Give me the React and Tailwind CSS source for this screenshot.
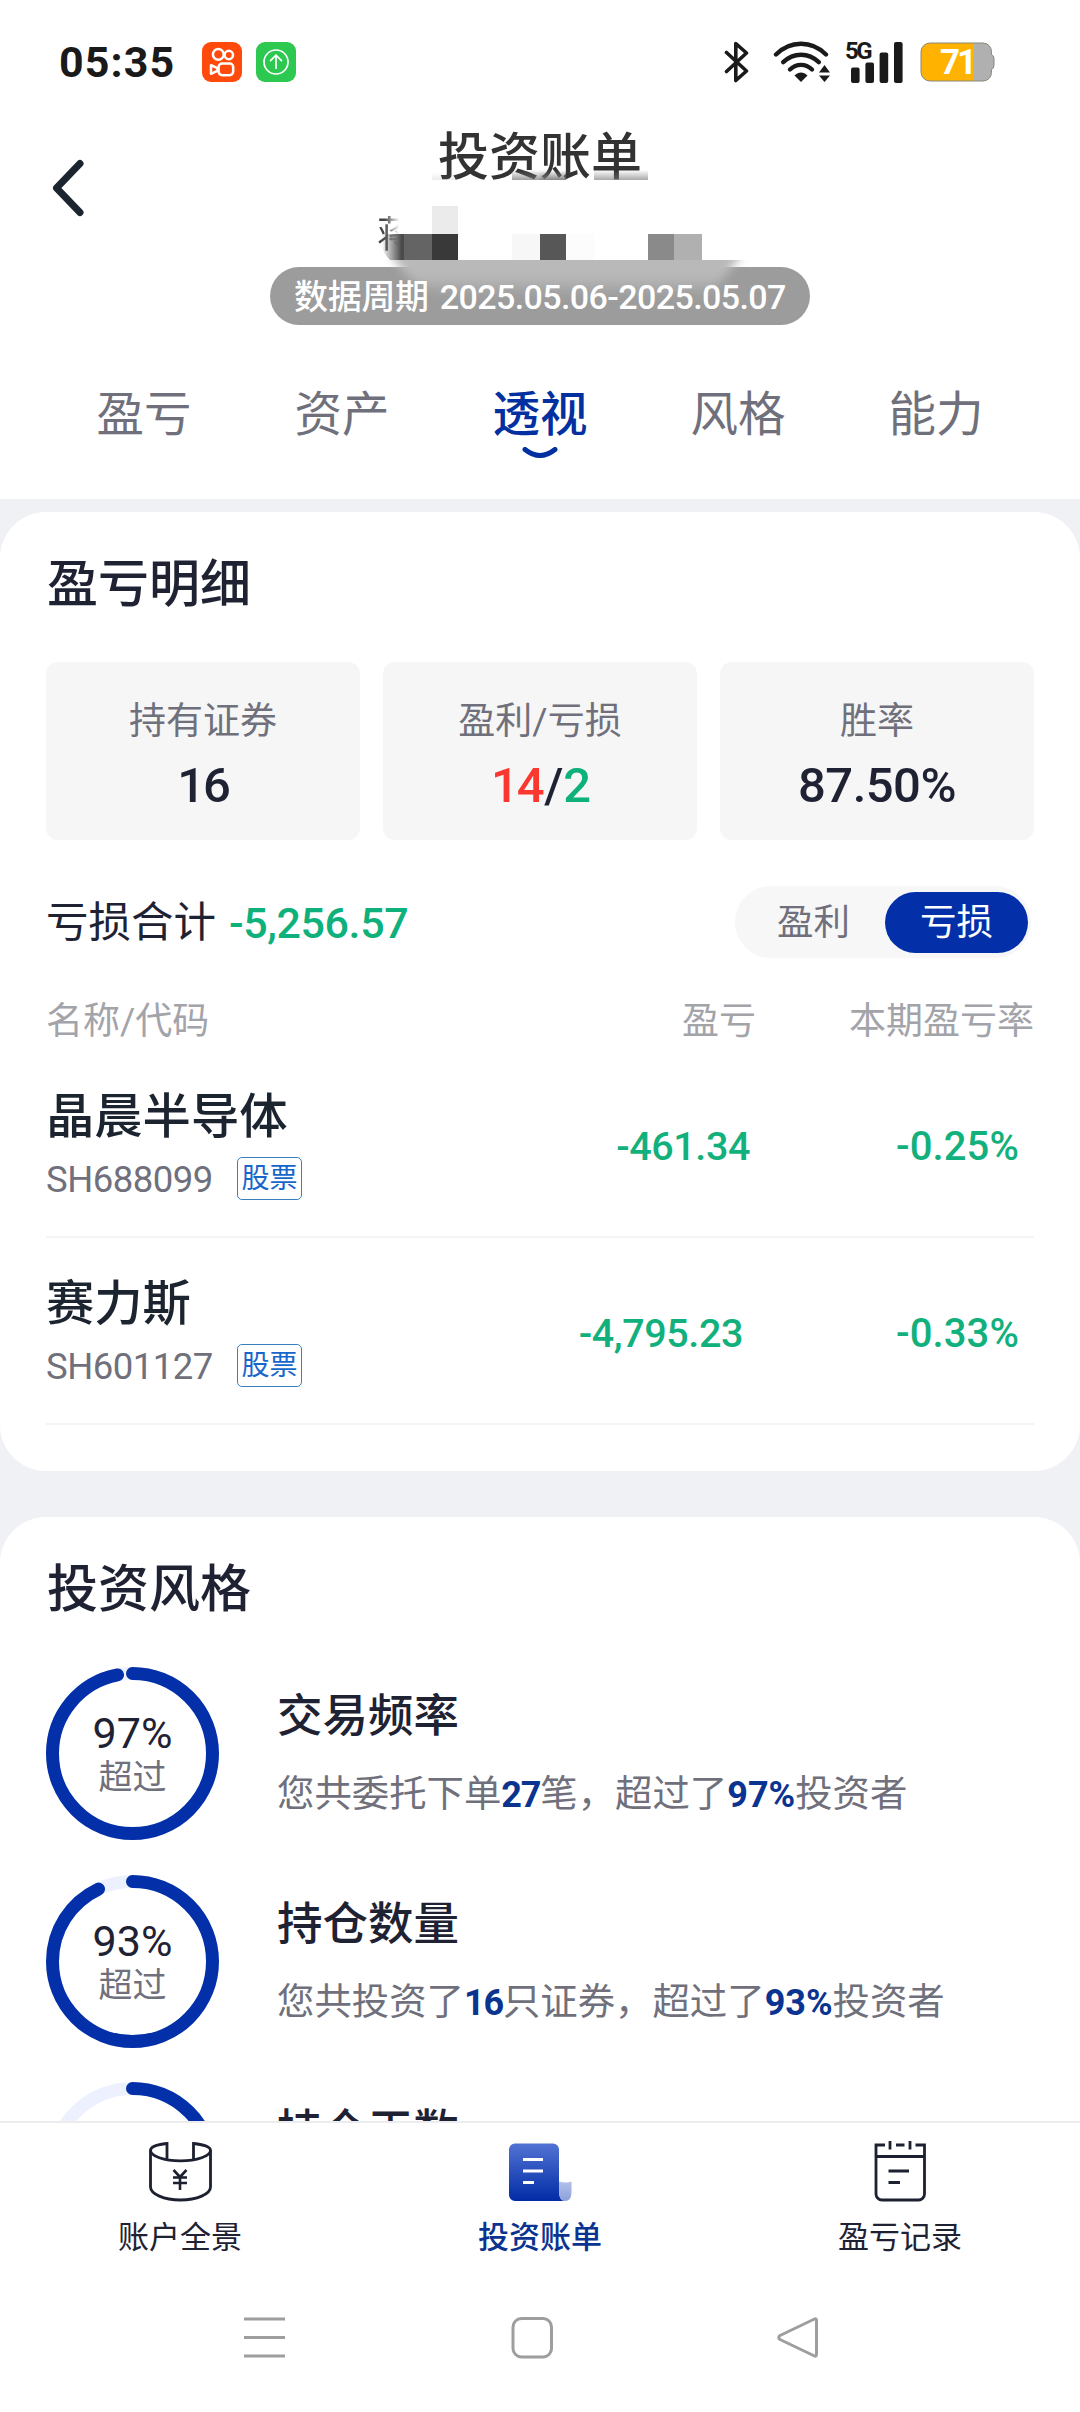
import { useState } from 'react'
import clsx from 'clsx'

const TABS = ['盈亏', '资产', '透视', '风格', '能力']

const HOLDINGS = [
  { name: '晶晨半导体', code: 'SH688099', type: '股票', profit: '-461.34', rate: '-0.25%', gap: 'mr-[146px]' },
  { name: '赛力斯', code: 'SH601127', type: '股票', profit: '-4,795.23', rate: '-0.33%', gap: 'mr-[153px]' },
]

const STYLES = [
  { title: '交易频率', percent: 97, before: '您共委托下单', count: '27', after: '笔，超过了' },
  { title: '持仓数量', percent: 93, before: '您共投资了', count: '16', after: '只证券，超过了' },
  { title: '持仓天数', percent: 72 },
]

const StatusBar = () => (
  <div className="flex h-[122px] shrink-0 items-center pl-[59px] pt-[2px] text-[#1a1a1a]">
    <span className="w-[143px] text-[43px] font-bold leading-[44px] tracking-[1.1px]">05:35</span>
    <svg className="mr-[14px] size-[40px]" viewBox="0 0 40 40" fill="none" stroke="#fff" strokeWidth="2.5">
      <rect width="40" height="40" rx="9" fill="#ff4a0c" stroke="none" />
      <circle cx="16.3" cy="12.4" r="5.4" />
      <circle cx="26.8" cy="13" r="4.2" />
      <rect x="16.6" y="21.6" width="14.6" height="11.6" rx="3.6" />
      <path d="M9 23.2v8.6l6.4-3v-2.6z" strokeLinejoin="round" />
    </svg>
    <svg className="size-[40px]" viewBox="0 0 40 40" fill="none" stroke="#fff" strokeWidth="1.7">
      <rect width="40" height="40" rx="9" fill="#2dc84f" stroke="none" />
      <circle cx="20" cy="20" r="12" />
      <path d="M20 27V13.4M14 19.2l6-6 6 6" />
    </svg>

    <svg className="ml-[428px] h-[42px] w-[25px]" viewBox="0 0 25 42" fill="none" stroke="#1a1a1a" strokeWidth="3.6" strokeLinejoin="round" strokeLinecap="round">
      <path d="M2.5 11.5L22.5 30 11.8 39.5V2.5L22.5 12 2.5 30.5" />
    </svg>
    <svg className="ml-[24px] h-[42px] w-[58px]" viewBox="0 0 58 42" fill="none" stroke="#1a1a1a" strokeWidth="4.4" strokeLinecap="round">
      <path d="M3 13.5C17.5 -0.8 38.5 -0.8 53 13.5" />
      <path d="M10.2 21.2C20.5 11.2 35.5 11.2 45.8 21.2" />
      <path d="M17 28.5C23.5 22.3 32.5 22.3 39 28.5" />
      <path d="M21.5 34.5C25.5 30.5 30.5 30.5 34.5 34.5L28 41z" fill="#1a1a1a" stroke="none" />
      <path d="M46 31.5l5.5-7.5 5.5 7.5zM46 34.5h11L51.5 41z" fill="#1a1a1a" stroke="none" />
    </svg>
    <div className="relative ml-[14px] h-[42px] w-[60px]">
      <span className="absolute left-0 top-[-2px] text-[24px] font-bold leading-[24px] tracking-[-2.5px]">5G</span>
      <svg className="size-full" viewBox="0 0 60 42" fill="#1a1a1a">
        <rect x="6" y="26.5" width="8.6" height="15.5" rx="2" />
        <rect x="20.4" y="21.5" width="8.6" height="20.5" rx="2" />
        <rect x="34.6" y="11.5" width="8.6" height="30.5" rx="2" />
        <rect x="49" y="1" width="8.6" height="41" rx="2" />
      </svg>
    </div>
    <div className="relative ml-[15px] h-[40px] w-[75px]">
      <svg className="size-full" viewBox="0 0 75 40">
        <path d="M63 1H10a9 9 0 0 0-9 9v20a9 9 0 0 0 9 9h53a8.5 8.5 0 0 0 8.5-8.5v-3q2.5-1 2.5-4v-7q0-3-2.5-4V9.5A8.5 8.5 0 0 0 63 1z" fill="#b0b0b0" />
        <path d="M54 1H10a9 9 0 0 0-9 9v20a9 9 0 0 0 9 9h44z" fill="#ffb300" />
        <path d="M63 1H10a9 9 0 0 0-9 9v20a9 9 0 0 0 9 9h53a8.5 8.5 0 0 0 8.5-8.5v-3q2.5-1 2.5-4v-7q0-3-2.5-4V9.5A8.5 8.5 0 0 0 63 1z" fill="none" stroke="#8b8878" />
      </svg>
      <span className="absolute left-[20px] top-[3px] text-[35px] font-bold leading-[35px] tracking-[-3px] text-white">71</span>
    </div>
  </div>
)

// Pixelated account name between the title and the period pill
const NameMosaic = () => (
  <svg className="absolute left-[100px] top-0 h-[203px] w-[400px]" viewBox="370 122 400 203">
    <defs>
      <linearGradient id="smear" x1="0" y1="0" x2="0" y2="1">
        <stop offset="0" stopColor="#777" stopOpacity="0" />
        <stop offset="1" stopColor="#777" stopOpacity="0.9" />
      </linearGradient>
      <linearGradient id="strip" gradientUnits="userSpaceOnUse" x1="0" y1="260" x2="0" y2="296">
        <stop offset="0" stopColor="#b9b9b9" />
        <stop offset="0.45" stopColor="#b9b9b9" />
        <stop offset="1" stopColor="#b9b9b9" stopOpacity="0" />
      </linearGradient>
      <linearGradient id="edge" x1="0" y1="0" x2="1" y2="0">
        <stop offset="0.1" stopColor="#4a4a4a" stopOpacity="0" />
        <stop offset="0.9" stopColor="#4a4a4a" />
      </linearGradient>
      <filter id="soft" x="-10%" y="-50%" width="120%" height="200%">
        <feGaussianBlur stdDeviation="5" />
      </filter>
      <clipPath id="below">
        <rect x="370" y="260" width="400" height="50" />
      </clipPath>
    </defs>
    <rect x="432" y="172" width="26" height="8" fill="url(#smear)" opacity="0.15" />
    <rect x="512" y="170" width="28" height="10" fill="url(#smear)" opacity="0.8" />
    <rect x="540" y="170" width="26" height="10" fill="url(#smear)" />
    <rect x="594" y="170" width="54" height="10" fill="url(#smear)" opacity="0.7" />
    <rect x="432" y="206" width="26" height="28" fill="#ebebeb" />
    <path d="M379 234h25v26h-14q-9-8-11-26z" fill="url(#edge)" />
    <rect x="404" y="234" width="28" height="26" fill="#646464" />
    <rect x="432" y="234" width="26" height="26" fill="#393939" />
    <rect x="512" y="234" width="28" height="26" fill="#f7f7f7" />
    <rect x="540" y="234" width="26" height="26" fill="#575757" />
    <rect x="566" y="234" width="28" height="26" fill="#fcfcfc" />
    <rect x="648" y="234" width="26" height="26" fill="#8a8a8a" />
    <rect x="674" y="234" width="28" height="26" fill="#b0b0b0" />
    <g clipPath="url(#below)">
      <path d="M384 240H752Q732 270 708 296H440Q400 280 384 240z" fill="url(#strip)" filter="url(#soft)" />
    </g>
  </svg>
)

const Header = () => {
  const [active, setActive] = useState('透视')

  return (
    <header className="shrink-0 bg-white">
      <div className="flex">
        <button className="h-[132px] w-[270px] pl-[50px]" aria-label="返回">
          <svg className="h-[60px] w-[36px]" viewBox="0 0 36 60" fill="none" stroke="#1c2430" strokeWidth="7" strokeLinecap="round" strokeLinejoin="round">
            <path d="M30 5.5L6.5 30 30 54.5" />
          </svg>
        </button>
        <div className="relative flex w-[540px] flex-col items-center">
          <h1 className="h-[66px] text-[51px] font-medium leading-[71px] text-[#333]">投资账单</h1>
          <div className="flex h-[79px] w-full pl-[107px] pt-[26px]">
            <span className="w-[37px] bg-linear-to-r from-[#444] from-20% to-transparent to-60% bg-clip-text text-[37px] leading-[44px] text-transparent">蒋</span>
          </div>
          <div className="h-[58px] w-full rounded-full bg-[#9c9c9c]" />
          <NameMosaic />
          <p className="absolute bottom-[-1px] left-[24px] flex h-[58px] items-center gap-[11px] whitespace-nowrap text-[34px] font-medium leading-[58px] tracking-[-0.3px] text-white">
            数据周期
            <span className="tracking-[-0.6px]">2025.05.06-2025.05.07</span>
          </p>
        </div>
      </div>

      <nav className="flex h-[174px] px-[45px] pt-[59px]">
        {TABS.map(tab => (
          <button
            key={tab}
            onClick={() => setActive(tab)}
            className={clsx(
              'flex w-[198px] flex-col items-center text-[47.5px] leading-[62px]',
              tab === active ? 'font-medium text-[#0330a0]' : 'text-[#70707c]'
            )}
          >
            {tab}
            {tab === active && (
              <svg className="mt-px h-[12px] w-[36px]" viewBox="0 0 36 12" fill="none" stroke="#0330a0" strokeWidth="5" strokeLinecap="round">
                <path d="M3 2.5Q18 14.5 33 2.5" />
              </svg>
            )}
          </button>
        ))}
      </nav>
    </header>
  )
}

const StatCard = ({ label, tight, children }) => (
  <div className="flex h-[178px] flex-1 flex-col items-center rounded-[12px] bg-[#f6f6f6] pt-[35px]">
    <span className="text-[37px] leading-[50px] text-[#70707c]">{label}</span>
    <span className={clsx('mt-[11px] text-[49px] font-medium leading-[56px] text-[#1f2233]', tight ? 'tracking-[-2.2px]' : 'tracking-[-0.5px]')}>
      {children}
    </span>
  </div>
)

const ProfitDetail = () => {
  const [mode, setMode] = useState('亏损')

  return (
    <section className="h-[959px] shrink-0 rounded-[46px] bg-white px-[46px] pt-[40px]">
      <h2 className="pl-px text-[51px] font-medium leading-[66px] text-[#1f2233]">盈亏明细</h2>

      <div className="mt-[44px] flex gap-[23px]">
        <StatCard label="持有证券" tight>16</StatCard>
        <StatCard label="盈利/亏损" tight>
          <span className="text-[#fb382f]">14</span>
          <span className="mx-[2px]">/</span>
          <span className="text-[#0eb07b]">2</span>
        </StatCard>
        <StatCard label="胜率">87.50%</StatCard>
      </div>

      <div className="mt-[46px] flex h-[72px] items-center justify-between pr-[3px]">
        <p className="flex items-center gap-[13px] pt-[2px] text-[42.5px] leading-[56px] text-[#1f2233]">
          亏损合计
          <span className="text-[43px] font-medium tracking-[-0.4px] text-[#0eb07b]">-5,256.57</span>
        </p>
        <div className="flex h-[72px] w-[296px] items-center rounded-full bg-[#f7f7f8] pl-[7px] pr-[3px]">
          {['盈利', '亏损'].map(item => (
            <button
              key={item}
              onClick={() => setMode(item)}
              className={clsx(
                'h-[61px] w-[143px] rounded-full text-[36.5px] leading-[59px]',
                mode === item ? 'bg-[#0330a8] text-white' : 'text-[#70707c]'
              )}
            >
              {item}
            </button>
          ))}
        </div>
      </div>

      <div className="mb-[4px] mt-[39px] flex h-[50px] text-[37px] leading-[50px] text-[#a3a3aa]">
        <span className="flex-1">名称/代码</span>
        <span className="mr-[93px]">盈亏</span>
        <span>本期盈亏率</span>
      </div>

      {HOLDINGS.map(row => (
        <div key={row.code} className="flex h-[187px] items-center border-b-2 border-[#f4f4f5]">
          <div className="flex-1">
            <div className="text-[48.3px] font-medium leading-[62px] text-[#1c2430]">{row.name}</div>
            <div className="mt-[7px] flex h-[46px] items-center">
              <span className="w-[191px] pt-[4px] text-[36.5px] leading-[46px] tracking-[-0.5px] text-[#70707c]">{row.code}</span>
              <span className="h-[43px] w-[65px] rounded-[5px] border-[1.5px] border-[#3a7fc0] text-center text-[28px] leading-[41px] text-[#1766cc]">
                {row.type}
              </span>
            </div>
          </div>
          <span className={clsx('pt-[6px] text-[39.5px] font-medium tracking-[-0.4px] text-[#12b07c]', row.gap)}>
            {row.profit}
          </span>
          <span className="pr-[15px] pt-[6px] text-[40px] font-medium tracking-[0.1px] text-[#12b07c]">{row.rate}</span>
        </div>
      ))}
    </section>
  )
}

const Ring = ({ percent, labelled }) => (
  <div className="relative size-[173px] shrink-0">
    <svg className="size-full -rotate-90" viewBox="0 0 173 173" fill="none" strokeWidth="13">
      <circle cx="86.5" cy="86.5" r="80" stroke="#ecf0ff" />
      <circle cx="86.5" cy="86.5" r="80" stroke="#0330a8" strokeLinecap="round" pathLength="100" strokeDasharray={`${percent} 100`} />
    </svg>
    {labelled && (
      <div className="absolute inset-0 flex flex-col items-center pt-[43px]">
        <span className="text-[43px] leading-[46px] text-[#1f2233]">{percent}%</span>
        <span className="text-[34px] leading-[42px] text-[#70707c]">超过</span>
      </div>
    )}
  </div>
)

const InvestStyle = () => (
  <section className="mt-[46px] shrink-0 rounded-t-[46px] bg-white px-[46px] pt-[40px]">
    <h2 className="pl-px text-[51px] font-medium leading-[66px] text-[#1f2233]">投资风格</h2>
    <div className="mt-[44px] flex flex-col gap-[34.5px]">
      {STYLES.map(item => (
        <div key={item.title} className="flex h-[173px] gap-[58px]">
          <Ring percent={item.percent} labelled={!!item.before} />
          <div className="pt-[20px]">
            <h3 className="text-[45.5px] font-medium leading-[60px] text-[#1f2233]">{item.title}</h3>
            {item.before && (
              <p className="mt-[22px] whitespace-nowrap text-[37.4px] leading-[50px] text-[#70707c]">
                {item.before}
                <b className="text-[36px] font-bold tracking-[-1.2px] text-[#0b3390]">{item.count}</b>
                {item.after}
                <b className="text-[36px] font-bold text-[#0b3390]">{item.percent}%</b>
                投资者
              </p>
            )}
          </div>
        </div>
      ))}
    </div>
  </section>
)

const AccountIcon = () => (
  <svg className="h-[90px] w-[100px]" viewBox="0 0 100 90" fill="none" stroke="#1c2030" strokeWidth="2.8">
    <path d="M37 29.5V13.5C27 14.5 20.5 17 20.5 20.5C20.5 26 34 30.8 50.5 30.8S80.5 26 80.5 20.5C80.5 17 73 14.5 63.5 13.5V29.5" />
    <path d="M20.5 20.5V57C20.5 64 34 70 50.5 70S80.5 64 80.5 57V20.5" />
    <path d="M43.5 40l6.5 7 6.5-7M50 47v13M43 47.5h14M43 53h14" strokeWidth="2.6" />
  </svg>
)

const BillIcon = () => (
  <svg className="h-[90px] w-[100px]" viewBox="0 0 100 90">
    <defs>
      <linearGradient id="bill" x1="0" y1="0" x2="0" y2="1">
        <stop offset="0" stopColor="#5273d4" />
        <stop offset="1" stopColor="#022ca6" />
      </linearGradient>
      <linearGradient id="curl" x1="0" y1="0" x2="0" y2="1">
        <stop offset="0" stopColor="#b3c1ea" />
        <stop offset="1" stopColor="#8ba0dc" />
      </linearGradient>
    </defs>
    <path d="M25 13.5H63a6 6 0 0 1 6 6V60q0 11 6 11H25a6 6 0 0 1-6-6V19.5a6 6 0 0 1 6-6z" fill="url(#bill)" />
    <path d="M69 51.5q7 2 12.5 0V62q0 9-6.5 9q-6 0-6-9z" fill="url(#curl)" />
    <path d="M33 29.5h20M33 41h20M33 52.5h11" stroke="#fff" strokeWidth="2.8" />
  </svg>
)

const RecordIcon = () => (
  <svg className="h-[90px] w-[100px]" viewBox="-10 0 100 90" fill="none" stroke="#1c2030" strokeWidth="2.8">
    <path d="M25 15H16V64a6 6 0 0 0 6 6H58.5a6 6 0 0 0 6-6V15H55.5M36 15h8.5M16 26.5H64.5M30 11v8.5M50 11v8.5M28.5 41h20.5M28.5 52.5h11.5" />
  </svg>
)

const NAV_ITEMS = [
  { label: '账户全景', icon: AccountIcon },
  { label: '投资账单', icon: BillIcon, active: true },
  { label: '盈亏记录', icon: RecordIcon },
]

const BottomNav = () => (
  <nav className="flex h-[170px] shrink-0 border-t-2 border-[#ececee] bg-white">
    {NAV_ITEMS.map(({ label, icon: Icon, active }) => (
      <button key={label} className="flex w-[360px] flex-col items-center pt-[7px]">
        <Icon />
        <span className={clsx('-mt-[3px] text-[31px] leading-[42px]', active ? 'font-medium text-[#0b3390]' : 'text-[#1f2233]')}>
          {label}
        </span>
      </button>
    ))}
  </nav>
)

const SystemNav = () => (
  <div className="flex h-[121px] shrink-0 items-start gap-[224px] bg-white pl-[243px] pt-[25px]">
    <svg className="size-[43px]" viewBox="0 0 43 43" stroke="#9e9e9e" strokeWidth="3.2">
      <path d="M1 3h41M1 21.5h41M1 40h41" />
    </svg>
    <svg className="size-[43px]" viewBox="0 0 43 43" fill="none" stroke="#9e9e9e" strokeWidth="3">
      <rect x="3" y="2.5" width="38.5" height="38.5" rx="8.5" />
    </svg>
    <svg className="size-[43px]" viewBox="0 0 43 43" fill="none" stroke="#9e9e9e" strokeWidth="3" strokeLinejoin="round">
      <path d="M37.5 3Q39.5 2 39.5 5V38Q39.5 41 37.5 40L3 23.5Q0.5 21.5 3 19.5z" />
    </svg>
  </div>
)

const App = () => (
  <div className="flex h-[2412px] w-[1080px] flex-col overflow-hidden bg-white font-['Roboto','Noto_Sans_CJK_SC',sans-serif]">
    <StatusBar />
    <Header />
    <main className="flex min-h-0 flex-1 flex-col overflow-hidden bg-[#f0f1f5] pt-[13px]">
      <ProfitDetail />
      <InvestStyle />
    </main>
    <BottomNav />
    <SystemNav />
  </div>
)

export default App
